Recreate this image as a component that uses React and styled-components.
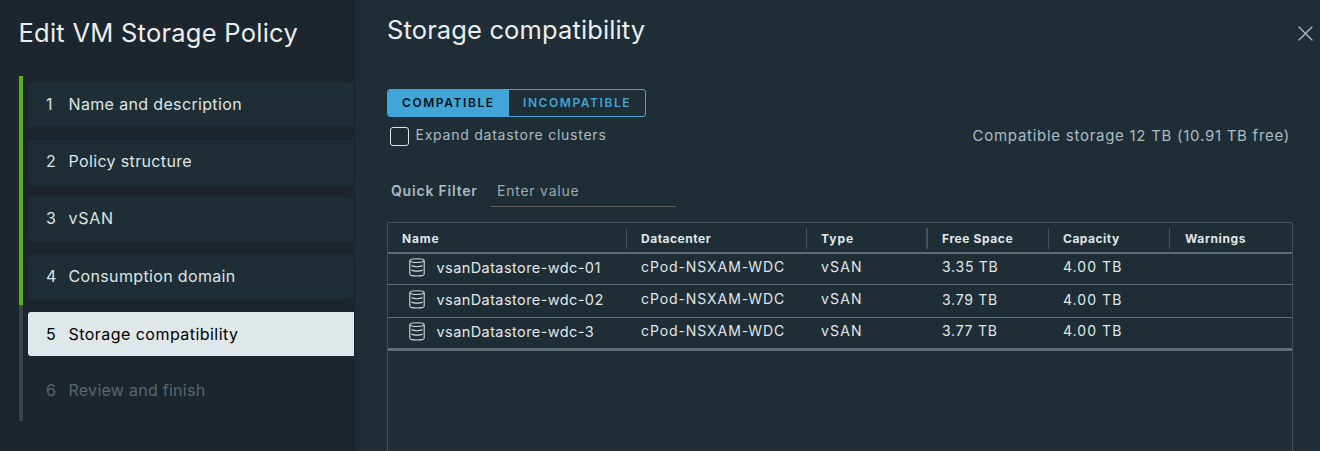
import React from 'react';
import styled, { createGlobalStyle } from 'styled-components';

const GlobalStyle = createGlobalStyle`
  * { box-sizing: border-box; }
  body {
    margin: 0;
    overflow: hidden;
    background: #1f2d34;
    font-family: Inter, "Liberation Sans", sans-serif;
  }
`;

const Wizard = styled.div`
  display: flex;
  width: 1320px;
  height: 451px;
  overflow: hidden;
  background: #1f2d34;
  color: #e0e7ea;
`;

const Sidebar = styled.aside`
  flex: 0 0 355px;
  background: #1c262c;
  border-right: 1px solid #19222a;
`;

const WizardTitle = styled.h1`
  margin: 0;
  padding: 17px 0 0 18.5px;
  height: 76px;
  font-size: 25.5px;
  line-height: 32px;
  font-weight: 400;
  letter-spacing: 0.25px;
  white-space: nowrap;
  color: #e9eef1;
`;

const Steps = styled.ol`
  list-style: none;
  margin: 0;
  padding: 0 0 0 19px;
`;

const Step = styled.li`
  height: ${({ $height = 57 }) => $height}px;
  padding: ${({ $top = 7 }) => $top}px 0 0 5px;
  border-left: 4px solid ${({ $done }) => ($done ? '#57b015' : '#39444a')};
`;

const StepButton = styled.button`
  display: flex;
  align-items: center;
  width: 100%;
  height: ${({ $height = 44 }) => $height}px;
  margin: 0;
  padding: 0 0 ${({ $lift = 2 }) => $lift}px 18px;
  border: 0;
  border-radius: 3px;
  border-top-right-radius: ${({ $state }) => ($state === 'current' ? 0 : 3)}px;
  border-bottom-right-radius: ${({ $state }) => ($state === 'current' ? 0 : 3)}px;
  background: ${({ $state }) =>
    ({ done: '#1f2d34', current: '#dfe7ea', todo: 'transparent' })[$state]};
  color: ${({ $state }) =>
    ({ done: '#dde5e8', current: '#000', todo: '#5b666c' })[$state]};
  font: 400 16px/20px Inter, sans-serif;
  letter-spacing: ${({ $track = 0.35 }) => $track}px;
  text-align: left;
  white-space: nowrap;
`;

const StepNumber = styled.span`
  flex: 0 0 22.5px;
`;

const Main = styled.main`
  flex: 1;
  display: flex;
  flex-direction: column;
  padding: 14px 27px 0 32px;
`;

const Header = styled.header`
  display: flex;
  justify-content: space-between;
  height: 75px;
  margin-right: -21px;
`;

const PageTitle = styled.h2`
  margin: 0;
  font-size: 25.5px;
  line-height: 32px;
  font-weight: 400;
  letter-spacing: 0.13px;
  color: #e9eef1;
`;

const CloseButton = styled.button`
  display: flex;
  align-self: flex-start;
  margin-top: 12px;
  padding: 0 1px 0 0;
  border: 0;
  background: none;
  color: #adbbc4;
`;

const Toggle = styled.div`
  display: flex;
  align-self: flex-start;
  width: 259px;
  height: 28px;
  border: 1px solid #42a5d8;
  border-radius: 3px;
  overflow: hidden;
`;

const ToggleButton = styled.button`
  flex: 0 0 ${({ $width }) => $width}px;
  padding: 0 0 0 14px;
  border: 0;
  background: ${({ $active }) => ($active ? '#42a5d8' : 'transparent')};
  color: ${({ $active }) => ($active ? '#00131c' : '#42a5d8')};
  font: 600 12px/16px Inter, sans-serif;
  letter-spacing: 1.58px;
  text-align: left;
`;

const OptionsRow = styled.div`
  display: flex;
  align-items: center;
  justify-content: space-between;
  height: 38px;
  color: #adbbc4;
`;

const CheckLabel = styled.label`
  display: flex;
  align-items: center;
  padding-left: 3px;
  font-size: 14px;
  line-height: 18px;
  letter-spacing: 0.76px;
`;

const CheckText = styled.span`
  padding-bottom: 2px;
`;

const CheckBox = styled.span`
  width: 19px;
  height: 19px;
  margin-right: 6.5px;
  border: 1px solid #dde5e8;
  border-radius: 3px;
`;

const Summary = styled.span`
  padding: 0 3px 1px 0;
  font-size: 15px;
  line-height: 18px;
  letter-spacing: 0.73px;
`;

const FilterRow = styled.div`
  display: flex;
  height: 67px;
  padding: 21px 0 0 4px;
`;

const FilterLabel = styled.label`
  width: 100px;
  padding-top: 6px;
  font-size: 14px;
  line-height: 18px;
  font-weight: 600;
  letter-spacing: 0.8px;
  color: #adbbc4;
`;

const FilterInput = styled.input`
  width: 185px;
  height: 31px;
  padding: 0 6px 2px;
  border: 0;
  border-bottom: 1px solid #5f5b59;
  outline: 0;
  background: none;
  color: #e0e7ea;
  font: 400 14px/18px Inter, sans-serif;
  letter-spacing: 0.77px;
  &::placeholder { color: #9ba9b0; opacity: 1; }
`;

const Table = styled.section`
  flex: 1;
  width: 906px;
  border: 1px solid #45525c;
  border-bottom: 0;
  border-radius: 3px 3px 0 0;
`;

const columns = '239px 180px 121px 121px 121px 1fr';

const HeadRow = styled.div`
  display: grid;
  grid-template-columns: ${columns};
  height: 31px;
  padding: 5px 0 3px;
  border-bottom: 2px solid #5f6e75;
`;

const HeadCell = styled.div`
  display: flex;
  align-items: center;
  padding-left: ${({ $inset = 14 }) => $inset}px;
  border-right: ${({ $rule = 1 }) => $rule}px solid #45525c;
  font-size: 12px;
  line-height: 16px;
  font-weight: 700;
  letter-spacing: ${({ $track = 0.6 }) => $track}px;
  color: #e0e7ea;
`;

const Row = styled.div`
  display: grid;
  grid-template-columns: ${columns};
  height: ${({ $height }) => $height}px;
  padding-top: ${({ $top }) => $top}px;
  border-bottom: ${({ $rule = 1 }) => $rule}px solid #5f6e75;
`;

const NameCell = styled.div`
  display: flex;
  align-items: flex-start;
  padding-left: 21px;
  gap: 11.5px;
  font-size: 14.5px;
  line-height: 20px;
  letter-spacing: 0.42px;
  white-space: nowrap;
`;

const Cell = styled.div`
  padding: ${({ $drop = 0 }) => $drop}px 0 0 14px;
  font-size: 14px;
  line-height: 18px;
  letter-spacing: ${({ $track = 0.92 }) => $track}px;
  white-space: nowrap;
`;

function DatastoreIcon() {
  return (
    <svg width="16" height="19" viewBox="0 0 16 19" fill="none" stroke="#d5dde0" strokeWidth="1.1">
      <ellipse cx="8" cy="2.6" rx="7.2" ry="1.9" />
      <path d="M.8 2.6v13.4c0 1.1 3.2 2 7.2 2s7.2-.9 7.2-2V2.6" />
      <path d="M2.4 7.6c1.2.7 3.3 1.1 5.6 1.1s4.4-.4 5.6-1.1M2.4 12c1.2.7 3.3 1.1 5.6 1.1s4.4-.4 5.6-1.1" />
    </svg>
  );
}

function CloseIcon() {
  return (
    <svg width="15" height="15" viewBox="0 0 15 15" fill="none" stroke="currentColor" strokeWidth="1.35" strokeLinecap="round">
      <path d="M1 1l13 13M14 1L1 14" />
    </svg>
  );
}

const steps = [
  { label: 'Name and description', state: 'done' },
  { label: 'Policy structure', state: 'done', height: 45, lift: 4 },
  { label: 'vSAN', state: 'done', height: 45, lift: 4, track: 0.7 },
  { label: 'Consumption domain', state: 'done', slot: 58, top: 8 },
  { label: 'Storage compatibility', state: 'current', lift: 0, track: 0.46 },
  { label: 'Review and finish', state: 'todo', slot: 59, track: 0.27 },
];

const stores = [
  { name: 'vsanDatastore-wdc-01', free: '3.35 TB', height: 31, top: 4 },
  { name: 'vsanDatastore-wdc-02', free: '3.79 TB', height: 33, top: 5, drop: 1 },
  { name: 'vsanDatastore-wdc-3', free: '3.77 TB', height: 33, top: 4 , rule: 3 },
];

export default function App() {
  return (
    <Wizard>
      <GlobalStyle />
      <Sidebar>
        <WizardTitle>Edit VM Storage Policy</WizardTitle>
        <Steps>
          {steps.map((step, i) => (
            <Step key={step.label} $done={step.state === 'done'} $height={step.slot} $top={step.top}>
              <StepButton $state={step.state} $height={step.height} $lift={step.lift} $track={step.track}>
                <StepNumber>{i + 1}</StepNumber>
                {step.label}
              </StepButton>
            </Step>
          ))}
        </Steps>
      </Sidebar>
      <Main>
        <Header>
          <PageTitle>Storage compatibility</PageTitle>
          <CloseButton aria-label="Close"><CloseIcon /></CloseButton>
        </Header>
        <Toggle>
          <ToggleButton $active $width={121}>COMPATIBLE</ToggleButton>
          <ToggleButton $width={136}>INCOMPATIBLE</ToggleButton>
        </Toggle>
        <OptionsRow>
          <CheckLabel>
            <CheckBox />
            <CheckText>Expand datastore clusters</CheckText>
          </CheckLabel>
          <Summary>Compatible storage 12 TB (10.91 TB free)</Summary>
        </OptionsRow>
        <FilterRow>
          <FilterLabel htmlFor="quick-filter">Quick Filter</FilterLabel>
          <FilterInput id="quick-filter" placeholder="Enter value" />
        </FilterRow>
        <Table>
          <HeadRow>
            <HeadCell $track={0.8}>Name</HeadCell>
            <HeadCell $track={0.5}>Datacenter</HeadCell>
            <HeadCell $rule={2} $track={0.95}>Type</HeadCell>
            <HeadCell>Free Space</HeadCell>
            <HeadCell $track={0.5}>Capacity</HeadCell>
            <HeadCell $rule={0} $inset={15}>Warnings</HeadCell>
          </HeadRow>
          {stores.map((store) => (
            <Row key={store.name} $height={store.height} $top={store.top} $rule={store.rule}>
              <NameCell>
                <DatastoreIcon />
                {store.name}
              </NameCell>
              <Cell>cPod-NSXAM-WDC</Cell>
              <Cell $track={1.2}>vSAN</Cell>
              <Cell $drop={store.drop} $track={0.75}>{store.free}</Cell>
              <Cell $drop={store.drop} $track={1.05}>4.00 TB</Cell>
            </Row>
          ))}
        </Table>
      </Main>
    </Wizard>
  );
}
